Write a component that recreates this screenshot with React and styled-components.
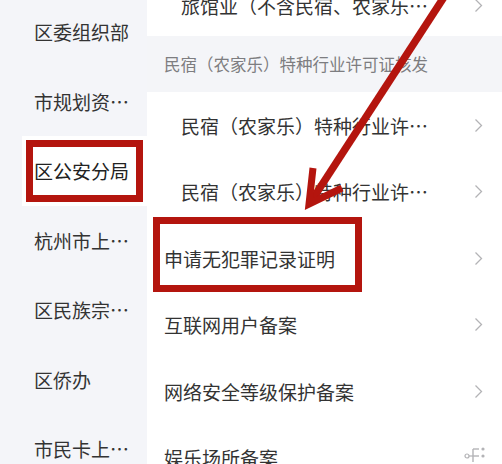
import React from "react";
import styled, { createGlobalStyle } from "styled-components";

const Global = createGlobalStyle`
  html, body { margin: 0; padding: 0; background: #fff; }
  body { font-family: "Noto Sans CJK SC", "Noto Sans", sans-serif; }
  * { box-sizing: border-box; }
`;

const Screen = styled.div`
  position: relative;
  width: 502px;
  height: 464px;
  overflow: hidden;
  display: flex;
  background: #fff;
`;

const Sidebar = styled.div`
  width: 147px;
  flex: none;
  background: #f4f5f9;
  display: flex;
  flex-direction: column;
  margin-top: -3px;
`;

const SideItem = styled.div`
  position: relative;
  height: 69.5px;
  flex: none;
  display: flex;
  align-items: center;
  padding-left: ${(p) => (p.$active ? 12 : 34)}px;
  margin-left: ${(p) => (p.$active ? 22 : 0)}px;
  background: ${(p) => (p.$active ? "#fff" : "transparent")};
  font-size: 19px;
  color: ${(p) => (p.$active ? "#222" : "#333")};
  white-space: nowrap;
`;

const Mark = styled.div`
  position: absolute;
  border: 7px solid #b4150e;
  pointer-events: none;
`;

const Panel = styled.div`
  flex: 1;
  display: flex;
  flex-direction: column;
  margin-top: -26px;
`;

const Row = styled.div`
  position: relative;
  flex: none;
  height: ${(p) => p.$h || 66.5}px;
  display: flex;
  align-items: center;
  justify-content: space-between;
  padding-left: ${(p) => (p.$sub ? 34 : 17)}px;
  padding-right: 19px;
  font-size: 19px;
  color: #333;
  white-space: nowrap;
`;

const Header = styled.div`
  flex: none;
  height: 56px;
  display: flex;
  align-items: center;
  padding-left: 17px;
  background: #f4f5f8;
  font-size: 16.5px;
  color: #7d7d80;
  white-space: nowrap;
`;

const Chevron = () => (
  <svg width="9" height="15" viewBox="0 0 9 15">
    <polyline points="1.5,1.5 7.5,7.5 1.5,13.5" fill="none" stroke="#b3b3b6" strokeWidth="1.3" />
  </svg>
);

const FloatIcon = () => (
  <svg width="22" height="16" viewBox="0 0 22 16" style={{ marginTop: -8, marginRight: -3 }}>
    <circle cx="3" cy="10" r="2" fill="none" stroke="#b3b3b6" strokeWidth="1.2" />
    <line x1="5" y1="10" x2="9" y2="10" stroke="#b3b3b6" strokeWidth="1.2" />
    <line x1="9" y1="3" x2="9" y2="16" stroke="#b3b3b6" strokeWidth="1.4" />
    <line x1="9" y1="3" x2="15" y2="3" stroke="#b3b3b6" strokeWidth="1.4" />
    <line x1="9" y1="10" x2="15" y2="10" stroke="#b3b3b6" strokeWidth="1.4" />
    <circle cx="19" cy="3" r="1.6" fill="#b3b3b6" />
    <circle cx="19" cy="10" r="1.6" fill="#b3b3b6" />
  </svg>
);

const ArrowLayer = styled.svg`
  position: absolute;
  left: 0;
  top: 0;
  width: 502px;
  height: 464px;
  pointer-events: none;
`;

const sideItems = ["区委组织部", "市规划资…", "区公安分局", "杭州市上…", "区民族宗…", "区侨办", "市民卡上…"];

export default function App() {
  return (
    <>
      <Global />
      <Screen>
        <Sidebar>
          {sideItems.map((t) => (
            <SideItem key={t} $active={t === "区公安分局"}>
              {t}
              {t === "区公安分局" && (
                <Mark style={{ left: 4, top: 3.5, width: 117, height: 62 }} />
              )}
            </SideItem>
          ))}
        </Sidebar>
        <Panel>
          <Row $sub $h={62}>
            <span>旅馆业（不含民宿、农家乐…</span>
            <Chevron />
          </Row>
          <Header>民宿（农家乐）特种行业许可证核发</Header>
          <Row $sub>
            <span>民宿（农家乐）特种行业许…</span>
            <Chevron />
          </Row>
          <Row $sub>
            <span>民宿（农家乐）特种行业许…</span>
            <Chevron />
          </Row>
          <Row>
            <span>申请无犯罪记录证明</span>
            <Chevron />
            <Mark style={{ left: 6, top: -8, width: 209, height: 75 }} />
          </Row>
          <Row>
            <span>互联网用户备案</span>
            <Chevron />
          </Row>
          <Row>
            <span>网络安全等级保护备案</span>
            <Chevron />
          </Row>
          <Row>
            <span>娱乐场所备案</span>
            <FloatIcon />
          </Row>
        </Panel>
        <ArrowLayer viewBox="0 0 502 464">
          <line x1="446" y1="-6" x2="312" y2="200" stroke="#b4150e" strokeWidth="7.5" />
          <polyline
            points="313,168 309,204 342,188"
            fill="none"
            stroke="#b4150e"
            strokeWidth="7"
            strokeLinejoin="miter"
          />
        </ArrowLayer>
      </Screen>
    </>
  );
}
